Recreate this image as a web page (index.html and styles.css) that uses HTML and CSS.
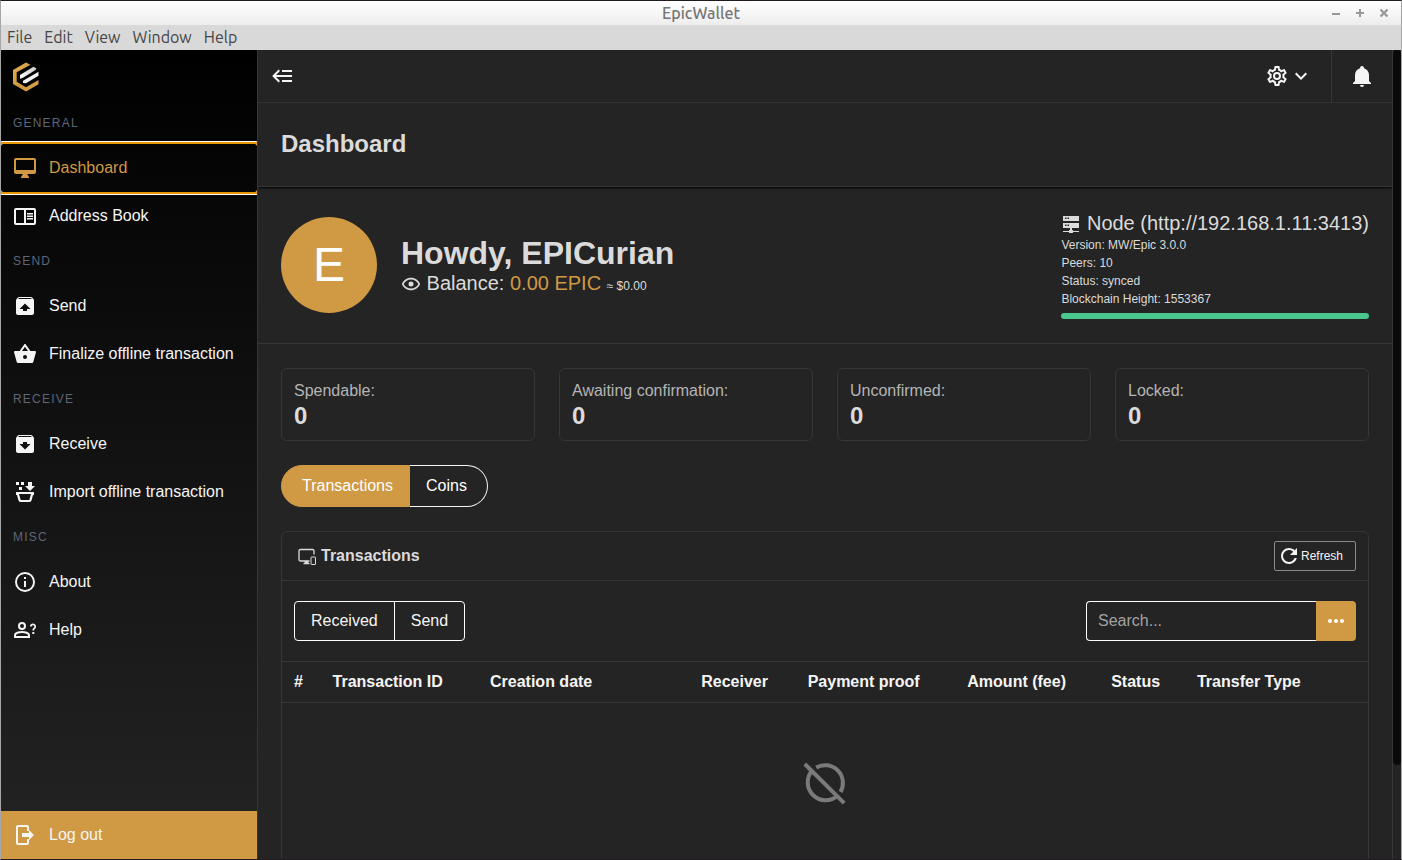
FILE: index.html
```html
<!DOCTYPE html>
<html lang="en">
<head>
<meta charset="utf-8">
<title>EpicWallet</title>
<link rel="stylesheet" href="styles.css">
</head>
<body>
<div class="window">
  <header class="titlebar">
    <span class="titlebar-name">EpicWallet</span>
    <div class="titlebar-controls">
      <button type="button" aria-label="Minimize"><svg viewBox="0 0 10 10"><path d="M1 6h8" stroke="currentColor" stroke-width="2"/></svg></button>
      <button type="button" aria-label="Maximize"><svg viewBox="0 0 10 10"><path d="M1 5h8M5 1v8" stroke="currentColor" stroke-width="2"/></svg></button>
      <button type="button" aria-label="Close"><svg viewBox="0 0 10 10"><path d="M1.500 1.500l7 7M8.500 1.500l-7 7" stroke="currentColor" stroke-width="2.400"/></svg></button>
    </div>
  </header>
  <nav class="menubar" aria-label="Application menu">
    <button type="button">File</button>
    <button type="button">Edit</button>
    <button type="button">View</button>
    <button type="button">Window</button>
    <button type="button">Help</button>
  </nav>

  <div class="app">
    <aside class="sidebar">
      <div class="brand">
        <svg class="logo" viewBox="0 0 26 30" role="img" aria-label="Epic">
          <defs><linearGradient id="gold" x1="0" y1="0" x2="1" y2="1"><stop offset="0" stop-color="#e3b25a"/><stop offset=".5" stop-color="#cf9640"/><stop offset="1" stop-color="#dba548"/></linearGradient>
          <linearGradient id="silver" x1="0" y1="0" x2="1" y2="0"><stop offset="0" stop-color="#fff"/><stop offset="1" stop-color="#c8c8c8"/></linearGradient></defs>
          <path d="M13 .5L17.500 2.800 3.700 10.300V19.800L13 25.200 25.500 18V22.200L13 29.500 0 22V8z" fill="url(#gold)"/>
          <path d="M7 13L20.500 4.800 23.500 6.500 22.500 8 10 15.800 7 16.800z" fill="url(#silver)"/>
          <path d="M10 18.800L25.500 9.800V13.800L13 21.300 10 21z" fill="#f1f1f1"/>
        </svg>
      </div>
      <nav class="side-nav" aria-label="Main">
        <p class="side-label">General</p>
        <a class="side-link is-active" href="#"><svg class="icon" viewBox="0 0 24 24"><path d="M21 2H3c-1.100 0-2 .9-2 2v12c0 1.100.9 2 2 2h7l-2 3v1h8v-1l-2-3h7c1.100 0 2-.9 2-2V4c0-1.100-.9-2-2-2zm0 12H3V4h18v10z"/></svg>Dashboard</a>
        <a class="side-link" href="#"><svg class="icon" viewBox="0 0 24 24"><path fill-rule="evenodd" d="M3 4h18a2 2 0 0 1 2 2v13a2 2 0 0 1-2 2H3a2 2 0 0 1-2-2V6a2 2 0 0 1 2-2zM3 6v13h8V6zM13 6v13h8V6z"/><path d="M14 9h6v1.500h-6zM14 11.500h6V13h-6zM14 14h6v1.500h-6z"/></svg>Address Book</a>
        <p class="side-label">Send</p>
        <a class="side-link" href="#"><svg class="icon" viewBox="0 0 24 24"><path d="M20.540 5.230l-1.390-1.680C18.880 3.210 18.470 3 18 3H6c-.47 0-.88.21-1.160.55L3.460 5.230C3.170 5.570 3 6.020 3 6.500V19c0 1.100.9 2 2 2h14c1.100 0 2-.9 2-2V6.500c0-.48-.17-.93-.46-1.270zM12 9.500l5.500 5.500H14v2h-4v-2H6.500L12 9.500zM5.120 5l.82-1h12l.93 1H5.120z"/></svg>Send</a>
        <a class="side-link" href="#"><svg class="icon" viewBox="0 0 24 24"><path d="M5.500,21C4.720,21 4.040,20.550 3.710,19.900L1.100,10.440L1,10A1,1 0 0,1 2,9H6.580L11.180,2.430C11.360,2.170 11.660,2 12,2C12.340,2 12.650,2.170 12.830,2.440L17.420,9H22A1,1 0 0,1 23,10L22.960,10.290L20.290,19.900C19.960,20.550 19.280,21 18.500,21H5.500M12,4.740L9,9H15L12,4.740M12,13A2,2 0 0,0 10,15A2,2 0 0,0 12,17A2,2 0 0,0 14,15A2,2 0 0,0 12,13Z"/></svg>Finalize offline transaction</a>
        <p class="side-label">Receive</p>
        <a class="side-link" href="#"><svg class="icon" viewBox="0 0 24 24"><path d="M20.540 5.230l-1.390-1.680C18.880 3.210 18.470 3 18 3H6c-.47 0-.88.21-1.160.55L3.460 5.230C3.170 5.570 3 6.020 3 6.500V19c0 1.100.9 2 2 2h14c1.100 0 2-.9 2-2V6.500c0-.48-.17-.93-.46-1.270zM12 17.500L6.500 12H10v-2h4v2h3.500L12 17.500zM5.120 5l.81-1h12l.94 1H5.120z"/></svg>Receive</a>
        <a class="side-link" href="#"><svg class="icon" viewBox="0 0 24 24"><path d="M3 2h3v3H3zM8 2h3v3H8zM6 7h3v3H6zM15 2h4v4h3l-5 5-5-5h3z"/><path fill-rule="evenodd" d="M3 12h18v3h-1l-1.500 5.500A2 2 0 0 1 16.600 22H7.400a2 2 0 0 1-1.900-1.500L4 15H3zM6 14l1.700 6h8.600L18 14z"/></svg>Import offline transaction</a>
        <p class="side-label">Misc</p>
        <a class="side-link" href="#"><svg class="icon" viewBox="0 0 24 24"><path d="M11,9H13V7H11M12,20C7.590,20 4,16.410 4,12C4,7.590 7.590,4 12,4C16.410,4 20,7.590 20,12C20,16.410 16.410,20 12,20M12,2A10,10 0 0,0 2,12A10,10 0 0,0 12,22A10,10 0 0,0 22,12A10,10 0 0,0 12,2M11,17H13V11H11V17Z"/></svg>About</a>
        <a class="side-link" href="#"><svg class="icon" viewBox="0 0 24 24" ><g fill="none" stroke="currentColor" stroke-width="2"><circle cx="9" cy="8" r="3"/><path d="M2 19v-2c0-2 4-3 7-3s7 1 7 3v2z"/><path d="M17.800 8.500a2.200 2.200 0 1 1 3.900 1.400c-.8.900-1.500 1.200-1.500 2.600" stroke-width="1.700"/></g><path d="M19.300 14h2v2h-2z"/></svg>Help</a>
      </nav>
      <button type="button" class="side-link logout"><svg class="icon" viewBox="0 0 24 24"><path d="M15 8V4a1 1 0 0 0-1-1H5a1 1 0 0 0-1 1v16a1 1 0 0 0 1 1h9a1 1 0 0 0 1-1v-4" fill="none" stroke="currentColor" stroke-width="2"/><path d="M9 10h7V7l5 5-5 5v-3H9z"/></svg>Log out</button>
    </aside>

    <main class="main">
      <div class="topbar">
        <button type="button" class="collapse" aria-label="Collapse menu"><svg class="icon" viewBox="0 0 24 24"><path d="M5,13L9,17L7.600,18.420L1.180,12L7.600,5.580L9,7L5,11H21V13H5M21,6V8H11V6H21M21,16V18H11V16H21Z"/></svg></button>
        <button type="button" class="settings" aria-label="Settings"><svg class="icon" viewBox="0 0 24 24"><path d="M12,8A4,4 0 0,1 16,12A4,4 0 0,1 12,16A4,4 0 0,1 8,12A4,4 0 0,1 12,8M12,10A2,2 0 0,0 10,12A2,2 0 0,0 12,14A2,2 0 0,0 14,12A2,2 0 0,0 12,10M10,22C9.750,22 9.540,21.820 9.500,21.580L9.130,18.930C8.500,18.680 7.960,18.340 7.440,17.940L4.950,18.950C4.730,19.030 4.460,18.950 4.340,18.730L2.340,15.270C2.210,15.050 2.270,14.780 2.460,14.630L4.570,12.970L4.500,12L4.570,11L2.460,9.370C2.270,9.220 2.210,8.950 2.340,8.730L4.340,5.270C4.460,5.050 4.730,4.960 4.950,5.050L7.440,6.050C7.960,5.660 8.500,5.320 9.130,5.070L9.500,2.420C9.540,2.180 9.750,2 10,2H14C14.250,2 14.460,2.180 14.500,2.420L14.870,5.070C15.500,5.320 16.040,5.660 16.560,6.050L19.050,5.050C19.270,4.960 19.540,5.050 19.660,5.270L21.660,8.730C21.790,8.950 21.730,9.220 21.540,9.370L19.430,11L19.500,12L19.430,13L21.540,14.630C21.730,14.780 21.790,15.050 21.660,15.270L19.660,18.730C19.540,18.950 19.270,19.040 19.050,18.950L16.560,17.950C16.040,18.340 15.500,18.680 14.870,18.930L14.500,21.580C14.460,21.820 14.250,22 14,22H10M11.250,4L10.880,6.610C9.680,6.860 8.620,7.500 7.850,8.390L5.440,7.350L4.690,8.650L6.800,10.200C6.400,11.370 6.400,12.640 6.800,13.800L4.680,15.360L5.430,16.660L7.860,15.620C8.630,16.500 9.680,17.140 10.870,17.380L11.240,20H12.760L13.130,17.390C14.320,17.140 15.370,16.500 16.140,15.620L18.570,16.660L19.320,15.360L17.200,13.810C17.600,12.640 17.600,11.370 17.200,10.200L19.310,8.650L18.560,7.350L16.150,8.390C15.380,7.500 14.320,6.860 13.120,6.620L12.750,4H11.250Z"/></svg><svg class="icon" viewBox="0 0 24 24"><path d="M7.410,8.580L12,13.170L16.590,8.580L18,10L12,16L6,10L7.410,8.580Z"/></svg></button>
        <button type="button" class="alerts" aria-label="Notifications"><svg class="icon" viewBox="0 0 24 24"><path d="M21,19V20H3V19L5,17V11C5,7.900 7.030,5.170 10,4.290C10,4.190 10,4.100 10,4A2,2 0 0,1 12,2A2,2 0 0,1 14,4C14,4.100 14,4.190 14,4.290C16.970,5.170 19,7.900 19,11V17L21,19M14,21A2,2 0 0,1 12,23A2,2 0 0,1 10,21"/></svg></button>
      </div>
      <div class="title-band"><h1>Dashboard</h1></div>

      <section class="hero">
        <div class="avatar" aria-hidden="true">E</div>
        <div class="greeting">
          <h2>Howdy, EPICurian</h2>
          <p class="balance"><svg class="icon-s" viewBox="0 0 24 24"><path d="M12,9A3,3 0 0,1 15,12A3,3 0 0,1 12,15A3,3 0 0,1 9,12A3,3 0 0,1 12,9M12,4.500C17,4.500 21.270,7.610 23,12C21.270,16.390 17,19.500 12,19.500C7,19.500 2.730,16.390 1,12C2.730,7.610 7,4.500 12,4.500M3.180,12C4.830,15.360 8.240,17.500 12,17.500C15.760,17.500 19.170,15.360 20.820,12C19.170,8.640 15.760,6.500 12,6.500C8.240,6.500 4.830,8.640 3.180,12Z"/></svg> Balance: <span class="amount">0.00 EPIC</span> <small>≈ $0.00</small></p>
        </div>
        <div class="node">
          <p class="node-name"><svg class="icon-s" viewBox="0 0 20 20"><path fill-rule="evenodd" d="M2 2h16v5H2zM4 3.500V5h1.500V3.500zM6.500 3.500V5H8V3.500zM2 9h16v5H2zM4 10.500V12h1.500v-1.500zM6.500 10.500V12H8v-1.500z"/><path d="M9 14h2v2h1v1h6v1h-6v1H8v-1H2v-1h6v-1h1z"/></svg> Node (http://192.168.1.11:3413)</p>
          <p>Version: MW/Epic 3.0.0</p>
          <p>Peers: 10</p>
          <p>Status: synced</p>
          <p>Blockchain Height: 1553367</p>
          <div class="sync" role="progressbar" aria-label="Sync" aria-valuenow="100"></div>
        </div>
      </section>

      <section class="content">
        <div class="stats">
          <div class="stat"><p>Spendable:</p><strong>0</strong></div>
          <div class="stat"><p>Awaiting confirmation:</p><strong>0</strong></div>
          <div class="stat"><p>Unconfirmed:</p><strong>0</strong></div>
          <div class="stat"><p>Locked:</p><strong>0</strong></div>
        </div>
        <div class="tabs">
          <button type="button" class="tab is-selected">Transactions</button>
          <button type="button" class="tab">Coins</button>
        </div>
        <div class="panel">
          <div class="panel-head">
            <h3><svg class="icon-s" viewBox="0 0 20 20"><path d="M12.500 15H3.500a1.500 1.500 0 0 1-1.500-1.500V5a1.500 1.500 0 0 1 1.500-1.500H15.500A1.500 1.500 0 0 1 17 5v3.500" fill="none" stroke="currentColor" stroke-width="1.300"/><path d="M7.500 15h4v2h1v1.300h-6V17h1z"/><rect x="14" y="11" width="4.500" height="7.500" rx=".5" fill="none" stroke="currentColor"/></svg>Transactions</h3>
            <button type="button" class="refresh"><svg class="icon" viewBox="0 0 24 24"><path d="M17.650,6.350C16.200,4.900 14.210,4 12,4A8,8 0 0,0 4,12A8,8 0 0,0 12,20C15.730,20 18.840,17.450 19.730,14H17.650C16.830,16.330 14.610,18 12,18A6,6 0 0,1 6,12A6,6 0 0,1 12,6C13.660,6 15.140,6.690 16.220,7.780L13,11H20V4L17.650,6.350Z"/></svg>Refresh</button>
          </div>
          <div class="toolbar">
            <div class="filters">
              <button type="button">Received</button>
              <button type="button">Send</button>
            </div>
            <div class="search">
              <input type="text" placeholder="Search..." aria-label="Search">
              <button type="button" aria-label="More"><svg class="icon" viewBox="0 0 24 24"><circle cx="6" cy="12" r="2"/><circle cx="12" cy="12" r="2"/><circle cx="18" cy="12" r="2"/></svg></button>
            </div>
          </div>
          <table>
            <colgroup><col class="c-num"><col class="c-id"><col class="c-date"><col class="c-recv"><col class="c-proof"><col class="c-amt"><col class="c-status"><col></colgroup>
            <thead><tr><th>#</th><th>Transaction ID</th><th>Creation date</th><th>Receiver</th><th>Payment proof</th><th>Amount (fee)</th><th>Status</th><th>Transfer Type</th></tr></thead>
            <tbody><tr><td colspan="8" class="empty"><svg viewBox="0 0 24 24" role="img" aria-label="No transactions"><g fill="none" stroke="currentColor" stroke-width="2"><path d="M1.900 2.500L21.600 22.100M7.600 4.200A9 9 0 0 1 19.800 16.500M5.600 5.700A9 9 0 0 0 18.300 18.400"/></g></svg></td></tr></tbody>
          </table>
        </div>
      </section>
    </main>
    <div class="scroll-track" aria-hidden="true"><div class="scroll-thumb"></div></div>
  </div>
</div>
</body>
</html>
```
FILE: styles.css
```css
* { box-sizing: border-box; }

html, body { height: 100%; }

body {
  margin: 0;
  overflow: hidden;
  background: #242424;
  color: #dbdbdb;
  font: 16px/24px "Liberation Sans", Arial, sans-serif;
}

h1, h2, h3, p { margin: 0; }
a { text-decoration: none; }

button {
  padding: 0;
  border: 0;
  background: none;
  color: inherit;
  font: inherit;
}

svg { display: block; flex: none; fill: currentColor; }
.icon { width: 24px; height: 24px; }
.icon-s { width: 20px; height: 20px; }

.window {
  display: flex;
  flex-direction: column;
  height: 100vh;
  border: 1px solid #a6a6a6;
  border-top-color: #1f1b1f;
  border-bottom-color: #1f1b1f;
}

.titlebar {
  display: grid;
  grid-template-columns: 1fr auto 1fr;
  align-items: center;
  flex: none;
  height: 24px;
  padding: 0 12px;
  background: linear-gradient(#fff, #ededed);
  color: #757575;
  font-family: Ubuntu, "Noto Sans", sans-serif;
  font-weight: 500;
  font-size: 16px;
}

.titlebar-name { grid-column: 2; }

.titlebar-controls {
  display: flex;
  justify-content: flex-end;
  gap: 14px;
  color: #999;
}

.titlebar-controls svg { width: 10px; height: 10px; }

.menubar {
  display: flex;
  flex: none;
  gap: 12px;
  height: 25px;
  padding: 0 6px 2px;
  background: #d9d9d9;
  color: #464646;
  font-family: Ubuntu, "Noto Sans", sans-serif;
  font-size: 16px;
}

.app { display: flex; flex: 1; min-height: 0; }

.sidebar {
  display: flex;
  flex-direction: column;
  flex: none;
  width: 257px;
  overflow: hidden;
  border-right: 1px solid #363636;
  background: linear-gradient(#000, #242424);
}

.brand { height: 52px; padding: 12px; }
.logo { width: 26px; height: 30px; }
.side-nav { flex: 1; }

.side-label {
  height: 42px;
  padding: 12px;
  color: #5d6579;
  font-size: 12px;
  line-height: 18px;
  letter-spacing: .1em;
  text-transform: uppercase;
}

.side-link {
  display: flex;
  align-items: center;
  gap: 12px;
  width: 100%;
  height: 48px;
  padding: 0 12px;
  color: #f5f5f5;
}

.side-link.is-active {
  position: relative;
  border-radius: 2px;
  color: #d09944;
  box-shadow: 0 0 0 2px #e59700, 0 0 0 3px #fff;
}

.logout { background: #d09944; text-align: left; }

.main {
  flex: 1;
  min-width: 0;
  overflow: hidden;
  border-right: 1px solid #363636;
}

.topbar {
  display: flex;
  height: 53px;
  border-bottom: 1px solid #363636;
  color: #f5f5f5;
}

.topbar button { display: flex; align-items: center; justify-content: center; }
.collapse { width: 50px; }
.settings { margin-left: auto; padding: 0 18px; }
.alerts { width: 61px; border-left: 1px solid #363636; }

.title-band {
  position: relative;
  padding: 23px 23px 24px;
  border-bottom: 1px solid #363636;
  box-shadow: 0 1px 2px #000;
}

h1 { font-size: 24px; line-height: 36px; }

.hero {
  display: flex;
  align-items: center;
  gap: 24px;
  padding: 24px 23px;
  border-bottom: 1px solid #363636;
}

.avatar {
  display: grid;
  place-items: center;
  flex: none;
  width: 96px;
  height: 96px;
  border-radius: 50%;
  background: #d09944;
  color: #fff;
  font-size: 48px;
}

.greeting { flex: 1; padding-top: 2px; }
h2 { font-size: 32px; line-height: 36px; }
.balance { font-size: 20px; line-height: 24px; }
.balance small { font-size: 12px; }
.amount { color: #d09944; }

.balance svg, .node-name svg { display: inline-block; vertical-align: -4px; }

.node { font-size: 12px; line-height: 18px; }
.node-name { font-size: 20px; line-height: 25px; }

.sync {
  height: 6px;
  margin-top: 5px;
  border-radius: 3px;
  background: #48c78e;
}

.content {
  display: flex;
  flex-direction: column;
  gap: 24px;
  padding: 24px 23px;
}

.stats { display: grid; grid-template-columns: repeat(4, 1fr); gap: 24px; }

.stat {
  padding: 10px 12px;
  border: 1px solid #363636;
  border-radius: 6px;
}

.stat p { color: #b5b5b5; line-height: 24px; }
.stat strong { display: block; padding-bottom: 2px; font-size: 24px; line-height: 25px; }

.tabs { display: flex; color: #fff; }

.tab {
  height: 42px;
  padding: 0 20px 0 16px;
  border: 1px solid #f5f5f5;
  border-left: 0;
  border-radius: 0 21px 21px 0;
}

.tab.is-selected {
  padding: 0 16px 0 20px;
  border: 1px solid #d09944;
  border-radius: 21px 0 0 21px;
  background: #d09944;
}

.panel { border: 1px solid #363636; border-radius: 6px; }

.panel-head {
  display: flex;
  align-items: center;
  justify-content: space-between;
  height: 49px;
  padding: 0 12px 0 15px;
  border-bottom: 1px solid #363636;
}

h3 { display: flex; align-items: center; gap: 4px; font-size: 16px; }

.refresh {
  display: flex;
  align-items: center;
  height: 30px;
  padding: 0 12px 0 2px;
  border: 1px solid #8a8a8a;
  border-radius: 2px;
  color: #f5f5f5;
  font-size: 12px;
}

.toolbar {
  display: flex;
  justify-content: space-between;
  padding: 20px 12px;
}

.filters { display: flex; border: 1px solid #fff; border-radius: 4px; color: #f5f5f5; }
.filters button { height: 38px; padding: 0 16px; }
.filters button + button { border-left: 1px solid #fff; }

.search { display: flex; width: 270px; }

.search input {
  flex: 1;
  min-width: 0;
  height: 40px;
  padding: 0 11px;
  border: 1px solid #fff;
  border-right: 0;
  border-radius: 4px 0 0 4px;
  background: none;
  color: #f5f5f5;
  font: inherit;
}

.search input::placeholder { color: #a3a3a3; }

.search button {
  display: grid;
  place-items: center;
  width: 40px;
  border-radius: 0 4px 4px 0;
  background: #d09944;
  color: #fff;
}

table { width: 100%; border-collapse: collapse; table-layout: fixed; }

th {
  height: 41px;
  padding: 0 0 0 12px;
  border-top: 1px solid #363636;
  border-bottom: 1px solid #363636;
  color: #f5f5f5;
  text-align: left;
  white-space: nowrap;
}

.c-num { width: 3.55%; }
.c-id { width: 14.5%; }
.c-date { width: 19.45%; }
.c-recv { width: 9.8%; }
.c-proof { width: 14.7%; }
.c-amt { width: 13.25%; }
.c-status { width: 7.9%; }

.empty { padding: 56px 0; color: #7a7a7a; }
.empty svg { width: 48px; height: 48px; margin: 0 auto; }

.scroll-track { flex: none; width: 8px; background: #242424; }
.scroll-thumb { height: 88.4%; border-radius: 4px; background: #0a0a0a; }
```
